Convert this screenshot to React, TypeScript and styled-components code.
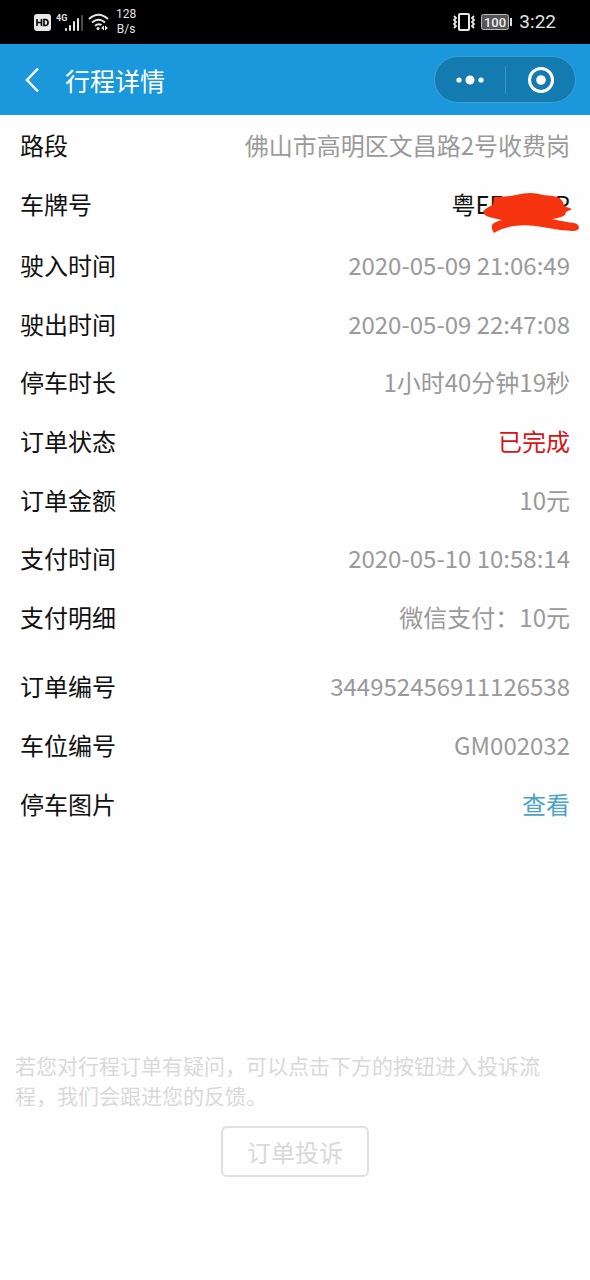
import React from "react";
import styled, { createGlobalStyle } from "styled-components";

const GlobalStyle = createGlobalStyle`
  *, *::before, *::after { box-sizing: border-box; }
  html, body { margin: 0; padding: 0; }
  body {
    background: #fff;
    color: #111;
    font-family: "Noto Sans CJK SC", "Noto Sans", sans-serif;
    font-size: 24px;
  }
  button { font: inherit; cursor: pointer; }
`;

const Page = styled.div`
  display: flex;
  flex-direction: column;
  min-height: 100vh;
  background: #fefefe;
`;

const StatusBar = styled.div`
  display: flex;
  justify-content: space-between;
  align-items: center;
  height: 44px;
  padding: 0 34px;
  background: #000;
  color: #e4e4e4;
  font-family: Roboto, sans-serif;
`;

const StatusGroup = styled.div<{ $gap: number }>`
  display: flex;
  align-items: center;
  gap: ${(p) => p.$gap}px;
`;

const NetSpeed = styled.div`
  font-size: 12px;
  line-height: 15px;
  text-align: center;
`;

const Clock = styled.time`
  font-size: 19px;
  line-height: 24px;
`;

const Header = styled.header`
  display: flex;
  align-items: center;
  height: 71px;
  padding: 0 14px 0 20px;
  background: #1b98dc;
  color: #fff;
`;

const BackButton = styled.button`
  display: flex;
  align-items: center;
  justify-content: center;
  width: 24px;
  height: 40px;
  padding: 0;
  border: 0;
  background: none;
  color: #fff;
`;

const Title = styled.h1`
  flex: 1;
  margin: 0 0 0 21px;
  font-size: 25px;
  line-height: 34px;
  font-weight: 400;
`;

const Capsule = styled.div`
  display: flex;
  align-items: center;
  width: 142px;
  height: 47px;
  border: 1px solid #3f9fd0;
  border-radius: 24px;
  background: #147bb1;
`;

const CapsuleButton = styled.button`
  display: flex;
  flex: 1;
  align-items: center;
  justify-content: center;
  height: 100%;
  padding: 0;
  border: 0;
  background: none;
  color: #fff;
`;

const CapsuleDivider = styled.span`
  width: 1px;
  height: 28px;
  background: #3a93c2;
`;

const Details = styled.main`
  padding: 0 20px;
`;

const Group = styled.dl<{ $minHeight: number; $space: number }>`
  display: grid;
  grid-auto-rows: 1fr;
  min-height: ${(p) => p.$minHeight}px;
  margin: ${(p) => p.$space}px 0 0;
`;

const Row = styled.div`
  display: flex;
  align-items: center;
  justify-content: space-between;
  gap: 16px;
  line-height: 34px;
`;

const Label = styled.dt`
  flex: none;
`;

const Value = styled.dd<{ $color?: string }>`
  margin: 0;
  text-align: right;
  color: ${(p) => p.$color ?? "#9a9a9a"};
`;

const Plate = styled.span`
  position: relative;
  display: flex;
  gap: 52px;
`;

const Scribble = styled.svg`
  position: absolute;
  top: 5px;
  right: -10px;
`;

const ViewLink = styled.a`
  color: #4ba3c7;
  text-decoration: none;
`;

const Footer = styled.footer`
  display: flex;
  flex-direction: column;
  align-items: center;
  gap: 16px;
  margin-top: auto;
  padding: 24px 30px 103px 15px;
  color: #d9d9d9;
`;

const Hint = styled.p`
  margin: 0;
  font-size: 21px;
  line-height: 30px;
`;

const ComplaintButton = styled.button`
  height: 51px;
  margin-left: 15px;
  padding: 0 24px;
  border: 2px solid #e0e0e0;
  border-radius: 6px;
  background: none;
  color: #d9d9d9;
  line-height: 34px;
`;

type Item = { label: string; value: React.ReactNode; color?: string };

const plate = (
  <Plate>
    <span>粤EF</span>
    <span>P</span>
    <Scribble width="98" height="42" viewBox="0 0 98 42" aria-hidden="true">
      <path
        d="M1 20 Q3 16 11 13 L12 5 Q23 5 34 3 Q49 -1 61 3 L71 4 Q78 5 81 10 L82 14 L90 17 L84 20 L83 23 Q78 26 70 27 Q84 30 92 31 Q97 32 97 36 Q96 39 91 39 Q75 38 60 35 Q45 32 32 34 Q20 36 12 41 Q9 37 10 33 Q12 30 20 28 Q10 26 4 24 Z"
        fill="#f5330f"
      />
    </Scribble>
  </Plate>
);

const groups: { minHeight: number; space: number; items: Item[] }[] = [
  {
    minHeight: 118,
    space: 0,
    items: [
      { label: "路段", value: "佛山市高明区文昌路2号收费岗" },
      { label: "车牌号", value: plate, color: "#111" },
    ],
  },
  {
    minHeight: 410,
    space: 3,
    items: [
      { label: "驶入时间", value: "2020-05-09 21:06:49" },
      { label: "驶出时间", value: "2020-05-09 22:47:08" },
      { label: "停车时长", value: "1小时40分钟19秒" },
      { label: "订单状态", value: "已完成", color: "#d81414" },
      { label: "订单金额", value: "10元" },
      { label: "支付时间", value: "2020-05-10 10:58:14" },
      { label: "支付明细", value: "微信支付：10元" },
    ],
  },
  {
    minHeight: 176,
    space: 11,
    items: [
      { label: "订单编号", value: "344952456911126538" },
      { label: "车位编号", value: "GM002032" },
      { label: "停车图片", value: <ViewLink href="#photos">查看</ViewLink> },
    ],
  },
];

const HdIcon = () => (
  <svg width="17" height="17" viewBox="0 0 17 17" aria-label="HD">
    <rect width="17" height="17" rx="3" fill="#e8e8e8" />
    <path
      d="M3 5v7M7.500 5v7M3 8.500h4.500M10 5.500v6h1.500q2.500 0 2.500-3t-2.500-3z"
      fill="none"
      stroke="#000"
      strokeWidth="1.600"
    />
  </svg>
);

const SignalIcon = () => (
  <svg width="27" height="20" viewBox="0 0 27 20" aria-label="4G">
    <text x="0" y="9" fontSize="9" fontWeight="700" fill="#e4e4e4" fontFamily="Roboto, sans-serif">
      4G
    </text>
    <g fill="#e8e8e8">
      <rect x="9" y="16" width="2" height="3" rx="1" />
      <rect x="13" y="13" width="2" height="6" rx="1" />
      <rect x="17" y="9" width="2" height="10" rx="1" />
      <rect x="21" y="6" width="2" height="13" rx="1" />
    </g>
    <rect x="25" y="3" width="2" height="16" rx="1" fill="#4a4a4a" />
  </svg>
);

const WifiIcon = () => (
  <svg width="23" height="18" viewBox="0 0 23 18" aria-label="Wi-Fi">
    <g fill="none" stroke="#e8e8e8" strokeWidth="2">
      <path d="M1 6Q10.500-2.500 20 6" />
      <path d="M4 9.500Q10.500 4 17 9.500" />
      <path d="M7 12.700Q10.500 10 13.500 12" />
    </g>
    <circle cx="10" cy="15.500" r="1.500" fill="#e8e8e8" />
    <path d="M16 12.500v5l-3-2.500zM17 12.500v5l3-2.500z" fill="#e8e8e8" />
  </svg>
);

const VibrateIcon = () => (
  <svg width="22" height="18" viewBox="0 0 22 18" fill="none" stroke="#e8e8e8" aria-label="振动">
    <rect x="6" y="1" width="10" height="16" rx="1" strokeWidth="2" />
    <path d="M1 3l2 2-2 2 2 2-2 2 2 2-2 2M21 3l-2 2 2 2-2 2 2 2-2 2 2 2" strokeWidth="1.800" />
  </svg>
);

const BatteryIcon = () => (
  <svg width="32" height="16" viewBox="0 0 32 16" aria-label="100%">
    <rect x="0.500" y="0.500" width="27" height="15" rx="2" fill="#555" stroke="#bbb" />
    <rect x="29" y="4" width="2" height="8" fill="#e0e0e0" />
    <text x="14" y="12.500" fontSize="13" textAnchor="middle" fontWeight="500" fill="#f2f2f2" fontFamily="Roboto, sans-serif">
      100
    </text>
  </svg>
);

export default function App() {
  return (
    <>
      <GlobalStyle />
      <Page>
        <StatusBar>
          <StatusGroup $gap={5}>
            <HdIcon />
            <SignalIcon />
            <WifiIcon />
            <NetSpeed>
              128
              <br />
              B/s
            </NetSpeed>
          </StatusGroup>
          <StatusGroup $gap={6}>
            <VibrateIcon />
            <BatteryIcon />
            <Clock>3:22</Clock>
          </StatusGroup>
        </StatusBar>
        <Header>
          <BackButton aria-label="返回">
            <svg width="16" height="26" viewBox="0 0 16 26" fill="none" stroke="currentColor" strokeWidth="2.500">
              <path d="M14 1.500L3 13l11 11.500" />
            </svg>
          </BackButton>
          <Title>行程详情</Title>
          <Capsule>
            <CapsuleButton aria-label="更多">
              <svg width="28" height="10" viewBox="0 0 28 10" fill="currentColor">
                <circle cx="3" cy="5" r="2.600" />
                <circle cx="14" cy="5" r="4.500" />
                <circle cx="25" cy="5" r="2.600" />
              </svg>
            </CapsuleButton>
            <CapsuleDivider />
            <CapsuleButton aria-label="关闭">
              <svg width="28" height="28" viewBox="0 0 28 28">
                <circle cx="15" cy="14" r="11.500" fill="none" stroke="currentColor" strokeWidth="3" />
                <circle cx="15" cy="14" r="4.800" fill="currentColor" />
              </svg>
            </CapsuleButton>
          </Capsule>
        </Header>
        <Details>
          {groups.map((group) => (
            <Group key={group.items[0].label} $minHeight={group.minHeight} $space={group.space}>
              {group.items.map((item) => (
                <Row key={item.label}>
                  <Label>{item.label}</Label>
                  <Value $color={item.color}>{item.value}</Value>
                </Row>
              ))}
            </Group>
          ))}
        </Details>
        <Footer>
          <Hint>若您对行程订单有疑问，可以点击下方的按钮进入投诉流程，我们会跟进您的反馈。</Hint>
          <ComplaintButton>订单投诉</ComplaintButton>
        </Footer>
      </Page>
    </>
  );
}
